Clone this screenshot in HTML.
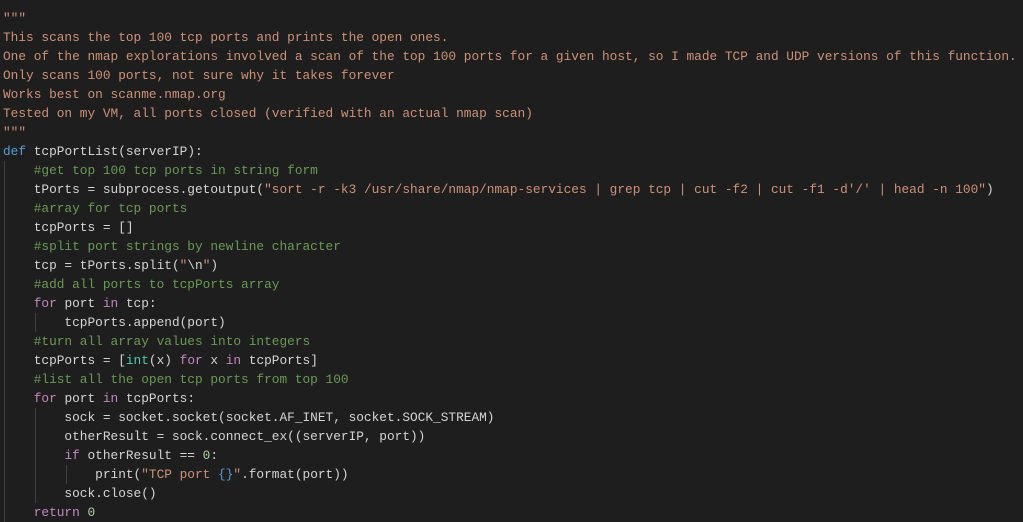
<!DOCTYPE html>
<html><head><style>
html,body{margin:0;background:#1e1e1e;width:1023px;height:522px;overflow:hidden}
pre{margin:0;padding:9px 0 0 3px;font-family:"Liberation Mono",monospace;font-size:12.8px;line-height:19px;color:#d4d4d4;position:relative}
.s{color:#ce9178}.k{color:#569cd6}.c{color:#6a9955}.p{color:#c586c0}.n{color:#b5cea8}.t{color:#4ec9b0}.e{color:#d7ba7d}
.g{position:absolute;width:1px;background:#404040}
</style></head><body>
<div class="g" style="left:4px;top:161px;height:361px"></div>
<div class="g" style="left:35px;top:313px;height:19px"></div>
<div class="g" style="left:35px;top:408px;height:95px"></div>
<div class="g" style="left:66px;top:465px;height:19px"></div>
<pre><span class="s">"""
This scans the top 100 tcp ports and prints the open ones.
One of the nmap explorations involved a scan of the top 100 ports for a given host, so I made TCP and UDP versions of this function.
Only scans 100 ports, not sure why it takes forever
Works best on scanme.nmap.org
Tested on my VM, all ports closed (verified with an actual nmap scan)
"""</span>
<span class="k">def</span> tcpPortList(serverIP):
    <span class="c">#get top 100 tcp ports in string form</span>
    tPorts = subprocess.getoutput(<span class="s">"sort -r -k3 /usr/share/nmap/nmap-services | grep tcp | cut -f2 | cut -f1 -d'/' | head -n 100"</span>)
    <span class="c">#array for tcp ports</span>
    tcpPorts = []
    <span class="c">#split port strings by newline character</span>
    tcp = tPorts.split(<span class="s">"</span>\n<span class="s">"</span>)
    <span class="c">#add all ports to tcpPorts array</span>
    <span class="p">for</span> port <span class="p">in</span> tcp:
        tcpPorts.append(port)
    <span class="c">#turn all array values into integers</span>
    tcpPorts = [<span class="t">int</span>(x) <span class="p">for</span> x <span class="p">in</span> tcpPorts]
    <span class="c">#list all the open tcp ports from top 100</span>
    <span class="p">for</span> port <span class="p">in</span> tcpPorts:
        sock = socket.socket(socket.AF_INET, socket.SOCK_STREAM)
        otherResult = sock.connect_ex((serverIP, port))
        <span class="p">if</span> otherResult == <span class="n">0</span>:
            print(<span class="s">"TCP port </span><span class="k">{}</span><span class="s">"</span>.format(port))
        sock.close()
    <span class="p">return</span> <span class="n">0</span></pre>
</body></html>
